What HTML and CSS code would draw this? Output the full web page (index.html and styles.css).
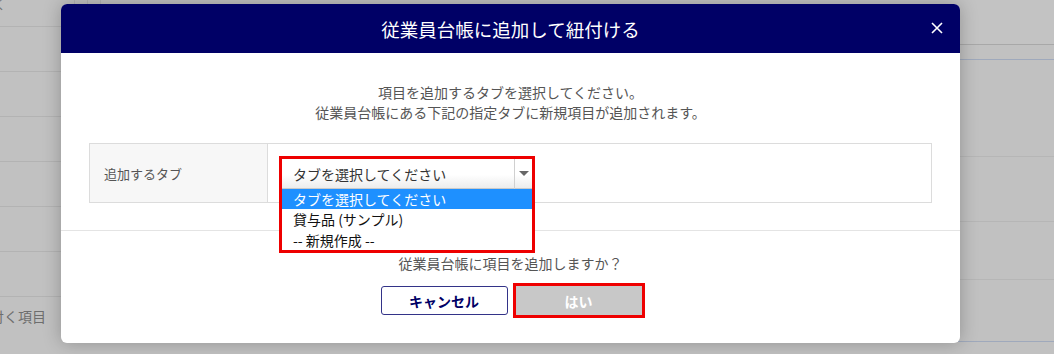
FILE: index.html
```html
<!DOCTYPE html>
<html lang="ja">
<head>
<meta charset="utf-8">
<link rel="stylesheet" href="styles.css">
</head>
<body>
<div class="page">
  <div class="bg-left">
    <div class="bg-row top-row"><span class="chev">く</span><span class="vcell"></span><span class="vcell"></span></div>
    <div class="bg-row"></div>
    <div class="bg-row"></div>
    <div class="bg-row"></div>
    <div class="bg-row"></div>
    <div class="bg-row"></div>
    <div class="bg-row"></div>
    <div class="bg-row label-row"><span class="bg-label">紐付く項目</span></div>
  </div>
  <div class="bg-right">
    <div class="rr rr-top"></div>
    <div class="rr rr-head"></div>
    <div class="rr rr-1"></div>
    <div class="rr rr-2"></div>
    <div class="rr rr-3"></div>
    <div class="rr rr-4"></div>
  </div>
</div>

<div class="modal">
  <div class="modal-header">
    <h1 class="modal-title">従業員台帳に追加して紐付ける</h1>
    <span class="modal-close">
      <svg width="12" height="12" viewBox="0 0 12 12"><path d="M1 1L11 11M11 1L1 11" stroke="#fff" stroke-width="1.6" fill="none"/></svg>
    </span>
  </div>
  <div class="modal-body">
    <p class="intro">項目を追加するタブを選択してください。<br>従業員台帳にある下記の指定タブに新規項目が追加されます。</p>
    <div class="form-table">
      <div class="form-label">追加するタブ</div>
      <div class="form-field">
        <div class="select-wrap">
          <div class="select">
            <span class="select-text">タブを選択してください</span>
            <span class="select-arrow"><span class="tri"></span></span>
          </div>
          <ul class="dropdown">
            <li class="opt selected">タブを選択してください</li>
            <li class="opt">貸与品 (サンプル)</li>
            <li class="opt">-- 新規作成 --</li>
          </ul>
          <div class="mark mark-select"></div>
        </div>
      </div>
    </div>
  </div>
  <div class="modal-footer">
    <p class="confirm">従業員台帳に項目を追加しますか？</p>
    <div class="buttons">
      <button class="btn btn-cancel">キャンセル</button>
      <button class="btn btn-ok">はい</button>
    </div>
  </div>
</div>
</body>
</html>
```

FILE: styles.css
```css
* { box-sizing: border-box; }
html, body { margin: 0; padding: 0; }
body {
  width: 1054px;
  height: 354px;
  overflow: hidden;
  position: relative;
  background: #c1c1c1;
  font-family: "Noto Sans CJK JP", "Noto Sans", sans-serif;
}

/* background page (dimmed) */
.page {
  display: flex;
  height: 354px;
}
.bg-left {
  width: 500px;
  overflow: hidden;
  display: flex;
  flex-direction: column;
}
.bg-row {
  height: 45px;
  border-bottom: 1px solid #b3b3b3;
  flex: none;
}
.top-row {
  height: 27px;
  display: flex;
  align-items: flex-start;
}
.chev {
  font-size: 13px;
  line-height: 13px;
  color: #777;
  margin-left: -7px;
  margin-top: -3px;
  width: 82px;
  border-right: 1px solid #b3b3b3;
  height: 27px;
}
.vcell {
  width: 13px;
  height: 27px;
  border-right: 1px solid #b3b3b3;
}
.label-row {
  border-bottom: none;
  display: flex;
  align-items: center;
  padding-bottom: 7px;
}
.bg-label {
  font-size: 14px;
  color: #6e6e6e;
  margin-left: -24px;
  letter-spacing: 0;
}
.bg-right {
  flex: 1;
  display: flex;
  flex-direction: column;
}
.rr { flex: none; }
.rr-top { height: 45px; border-bottom: 1px solid #a8a8a8; background: #c3c3c3; }
.rr-head { height: 15px; border-bottom: 1px solid #9fa9bc; }
.rr-1 { height: 97px; border-bottom: 1px solid #b6b6b6; }
.rr-2 { height: 65px; border-bottom: 1px solid #b6b6b6; }
.rr-3 { height: 58px; border-bottom: 1px solid #b6b6b6; }
.rr-4 { height: 62px; border-bottom: 1px solid #9fa9bc; }

/* modal */
.modal {
  position: absolute;
  left: 61px;
  top: 4px;
  width: 899px;
  height: 339px;
  background: #fff;
  border-radius: 6px;
  box-shadow: 0 0 18px rgba(0, 0, 0, 0.25);
  display: flex;
  flex-direction: column;
}
.modal-header {
  height: 49px;
  background: #000066;
  border-radius: 6px 6px 0 0;
  display: flex;
  align-items: center;
  justify-content: center;
  position: relative;
}
.modal-title {
  margin: 0;
  font-weight: normal;
  font-size: 18.5px;
  color: #fff;
  line-height: 24px;
}
.modal-close {
  position: absolute;
  right: 17px;
  top: 18px;
  width: 12px;
  height: 12px;
  display: flex;
}
.modal-body {
  padding: 29px 28px 0;
  height: 178px;
  border-bottom: 1px solid #e4e4e4;
}
.intro {
  margin: 0 0 21px;
  text-align: center;
  font-size: 14px;
  line-height: 20px;
  color: #555;
}
.form-table {
  display: grid;
  grid-template-columns: 178px 1fr;
  border: 1px solid #dcdcdc;
  height: 60px;
}
.form-label {
  background: #f7f7f7;
  border-right: 1px solid #dcdcdc;
  font-size: 13px;
  color: #555;
  display: flex;
  align-items: center;
  padding-left: 14px;
}
.form-field {
  display: flex;
  align-items: center;
  padding-left: 14px;
  padding-top: 2px;
}
.select-wrap {
  position: relative;
  width: 250px;
  height: 30px;
}
.select {
  height: 30px;
  display: flex;
  align-items: center;
  background: linear-gradient(#fff 0%, #fff 55%, #ececec 100%);
  border-bottom: 1px solid #c9c9c9;
}
.select-text {
  flex: 1;
  font-size: 14px;
  color: #333;
  padding-left: 11px;
}
.select-arrow {
  width: 18px;
  height: 30px;
  border-left: 1px solid #d0d0d0;
  display: flex;
  align-items: center;
  justify-content: center;
}
.tri {
  width: 0;
  height: 0;
  border-left: 5px solid transparent;
  border-right: 5px solid transparent;
  border-top: 5px solid #666;
}
.dropdown {
  position: absolute;
  left: 0;
  top: 30px;
  width: 250px;
  margin: 0;
  padding: 0;
  list-style: none;
  background: #fff;
  z-index: 2;
}
.opt {
  height: 20px;
  line-height: 20px;
  font-size: 14px;
  color: #111;
  padding-left: 11px;
}
.opt + .opt { height: 20.5px; }
.opt.selected {
  background: #1e90ff;
  color: #fff;
}
.mark {
  position: absolute;
  border: 3px solid #ee0000;
  pointer-events: none;
  z-index: 3;
}
.mark-select {
  left: -3px;
  top: -3px;
  width: 256px;
  height: 97px;
}

.modal-footer {
  padding-top: 22px;
  display: flex;
  flex-direction: column;
  align-items: center;
}
.confirm {
  margin: 0 0 13px;
  font-size: 14px;
  line-height: 20px;
  color: #555;
}
.buttons {
  display: flex;
  gap: 8px;
  padding-left: 1px;
}
.btn {
  height: 29px;
  font-family: inherit;
  font-size: 14px;
  font-weight: bold;
  border-radius: 3px;
  padding: 0;
}
.btn-cancel {
  width: 127px;
  background: #fff;
  color: #000066;
  border: 1px solid #333388;
}
.btn-ok {
  width: 126px;
  background: #c8c8c8;
  color: #fff;
  border: 1px solid #c8c8c8;
  border-radius: 0;
  outline: 3px solid #ee0000;
  outline-offset: 0;
}
```
